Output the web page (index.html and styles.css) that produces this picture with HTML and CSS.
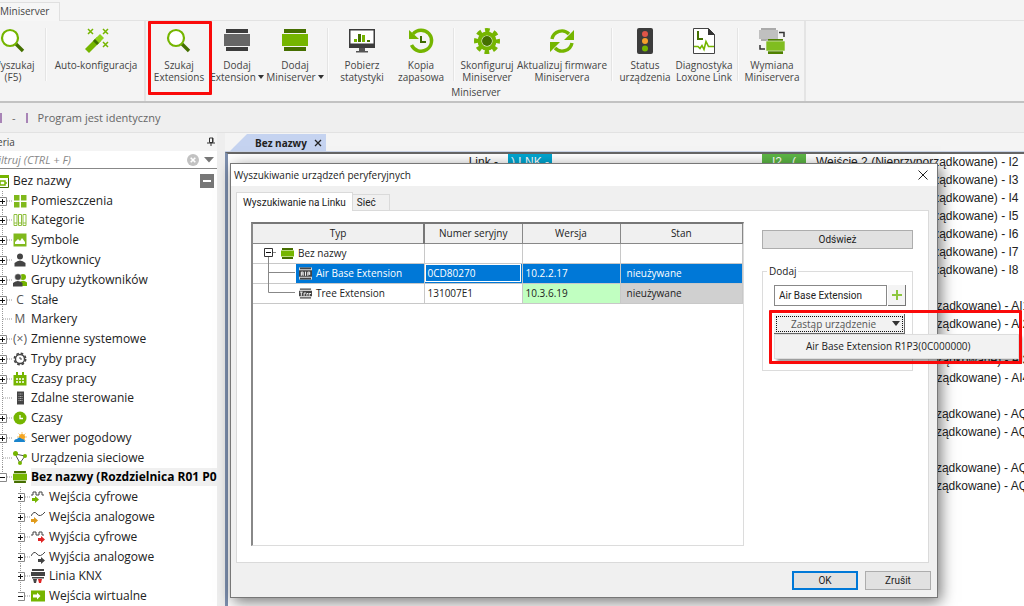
FILE: index.html
```html
<!DOCTYPE html>
<html lang="pl">
<head>
    <meta charset="UTF-8">
    <meta name="viewport" content="width=device-width, initial-scale=1.0">
    <title>Loxone Config - Wyszukiwanie urządzeń peryferyjnych</title>
    <link rel="stylesheet" href="styles.css">
</head>
<body>
    <!-- shared icons -->
    <svg class="defs" aria-hidden="true">
        <symbol id="search" viewBox="0 0 26 26">
            <path d="M16 16l7 7" stroke="#447000" stroke-width="3.4"/>
            <circle cx="10" cy="10" r="8" fill="#fff" stroke="#75b500" stroke-width="2.2"/>
        </symbol>
        <symbol id="device" viewBox="0 0 26 26">
            <path d="M2 1h22v4H2zM2 19h22v4H2z" fill="#466f00"/>
            <path d="M0 6h26v12H0z" fill="#75b500"/>
        </symbol>
        <symbol id="plus" viewBox="0 0 13 20">
            <path d="M2.5 0v20M7 10h6" stroke="#999" stroke-dasharray="1 1"/>
            <path d="M-1.5 6.5h8v8h-8z" fill="#fff" stroke="#888"/>
            <path d="M0 10.500h5M2.500 8v5" stroke="#111"/>
        </symbol>
        <symbol id="minus" viewBox="0 0 13 20">
            <path d="M2.5 0v6M7 10h6" stroke="#999" stroke-dasharray="1 1"/>
            <path d="M-1.5 6.5h8v8h-8z" fill="#fff" stroke="#888"/>
            <path d="M0 10.500h5" stroke="#111"/>
        </symbol>
        <symbol id="leaf" viewBox="0 0 13 20">
            <path d="M2.5 0v20M3 10h9" stroke="#999" stroke-dasharray="1 1"/>
        </symbol>
    </svg>

    <div class="app">
        <nav class="tabs"><a href="#" class="tab">Miniserver</a></nav>

        <div class="ribbon">
            <section class="group">
                <div class="tools">
                    <button class="tool cut"><svg viewBox="0 0 26 26"><use href="#search"/></svg>Wyszukaj<br>(F5)</button>
                    <i class="sep"></i>
                    <button class="tool xwide">
                        <svg viewBox="0 0 26 26"><path d="M2 21L14 9l4 4L6 25z" fill="#75b500"/><path d="M11 12l6-6 4 4-6 6z" fill="#8fd01a"/><path d="M10 13l2-2 4 4-2 2z" fill="#3f7000"/><path d="M5 1l5 5m0-5L5 6M20 1l5 5m0-5l-5 5M20 14l5 5m0-5l-5 5" stroke="#75b500" stroke-width="1.5"/></svg>Auto-konfiguracja</button>
                </div>
            </section>
            <section class="group main-group">
                <div class="tools">
                    <button class="tool marked"><svg viewBox="0 0 26 26"><use href="#search"/></svg>Szukaj<br>Extensions</button>
                    <button class="tool"><svg viewBox="0 0 26 26"><path d="M2 1h22v4H2zM2 19h22v4H2z" fill="#3c3c3c"/><path d="M0 6h26v12H0z" fill="#666"/></svg>Dodaj<br>Extension<b class="caret"></b></button>
                    <button class="tool"><svg viewBox="0 0 26 26"><use href="#device"/></svg>Dodaj<br>Miniserver<b class="caret"></b></button>
                    <i class="sep"></i>
                    <button class="tool wide"><svg viewBox="0 0 26 26"><path d="M0 1h26v19H0z" fill="#3c3c3c"/><path d="M1.500 2.500h23v13h-23z" fill="#fff"/><path d="M10 20h6v3h3v1.500H7V23h3z" fill="#555"/><path d="M5 11h3v3H5zM13 7h3v7h-3z" fill="#75b500"/><path d="M9 6h3v8H9zM18 12h3v2h-3z" fill="#447000"/></svg>Pobierz<br>statystyki</button>
                    <button class="tool"><svg viewBox="0 0 26 26"><path d="M5 6a10.500 10.500 0 1 1-1.500 11" fill="none" stroke="#75b500" stroke-width="3.400"/><path d="M1 2v9h10z" fill="#75b500"/><path d="M13 8v6h5" fill="none" stroke="#3f6b00" stroke-width="2"/></svg>Kopia<br>zapasowa</button>
                    <i class="sep"></i>
                    <button class="tool"><svg viewBox="0 0 26 26"><circle cx="13" cy="13" r="10.500" fill="none" stroke="#75b500" stroke-width="5" stroke-dasharray="4.500 3.750" stroke-dashoffset="2.250"/><circle cx="13" cy="13" r="7.500" fill="#f4f4f4" stroke="#75b500" stroke-width="4"/><circle cx="13" cy="13" r="5" fill="#447000"/></svg>Skonfiguruj<br>Miniserver</button>
                    <button class="tool xwide"><svg viewBox="0 0 26 26"><path d="M3 11A10 10 0 0 1 20 6M23 15A10 10 0 0 1 6 20" fill="none" stroke="#75b500" stroke-width="3.400"/><path d="M25 2v10H15zM1 24V14h10z" fill="#75b500"/></svg>Aktualizuj firmware<br>Miniservera</button>
                    <i class="sep"></i>
                    <button class="tool"><svg viewBox="0 0 26 26"><rect x="5" width="16" height="26" rx="2" fill="#3c3c3c"/><circle cx="13" cy="6" r="3" fill="#e05548"/><circle cx="13" cy="13" r="3" fill="#f7a02c"/><circle cx="13" cy="20.500" r="3" fill="#75b500"/></svg>Status<br>urządzenia</button>
                    <button class="tool wide"><svg viewBox="0 0 26 26"><path d="M2.500 .5h15l6 6v19h-21z" fill="#fff" stroke="#444"/><path d="M17 0v7h7z" fill="#333"/><path d="M7 3v8h5" fill="none" stroke="#447000" stroke-width="2"/><path d="M3 18.500h4l2 2 2-3 2 4 2-8 2.500 5H23" fill="none" stroke="#75b500" stroke-width="1.600"/></svg>Diagnostyka<br>Loxone Link</button>
                    <i class="sep"></i>
                    <button class="tool wide"><svg viewBox="0 0 26 26"><path d="M2 0h15v13H2z" fill="#aaa"/><path d="M0 2h19v9H0z" fill="#c0c0c0"/><path d="M9 11h15v15H9z" fill="#4f8000"/><path d="M7 13h19v10H7z" fill="#80bd20" stroke="#f4f4f4" stroke-width=".6"/><path d="M20 4.500h5V9M1 17v4h5" fill="none" stroke="#333" stroke-width="1.500"/></svg>Wymiana<br>Miniservera</button>
                </div>
                <span class="group-name">Miniserver</span>
            </section>
        </div>

        <div class="status"><i></i><span>-</span><i></i><span>Program jest identyczny</span></div>

        <main class="work">
            <aside class="side">
                <header class="side-head"><span class="side-title">Peryferia</span>
                    <svg class="pin" viewBox="0 0 8 10"><path d="M2.500 1h3.500v4.500h-3.500zM0 6h8M4 6v3M5.500 1v5" fill="none" stroke="#333"/></svg>
                </header>
                <div class="filter">
                    <input class="filter-box" type="text" placeholder="Filtruj (CTRL + F)" aria-label="Filtruj">
                    <button class="clear" aria-label="Wyczyść"><svg viewBox="0 0 13 13"><circle cx="6.500" cy="6.500" r="6.500" fill="#c2c2c2"/><path d="M4 4l5 5m0-5L4 9" stroke="#fff" stroke-width="1.700"/></svg></button>
                    <button class="more" aria-label="Opcje"><svg viewBox="0 0 10 6"><path d="M0 0h10L5 5.500z" fill="#777"/></svg></button>
                </div>
                <ul class="tree">
                    <li class="root"><svg class="ico" viewBox="0 0 14 14"><path d="M.5 1.500h13v12H.5z" fill="#fff" stroke="#447000"/><path d="M0 1h14v3H0z" fill="#75b500"/><path d="M5 7h5v4H5zM3 9h2m5 0h2" fill="none" stroke="#75b500" stroke-width="1.500"/></svg><span>Bez nazwy</span><button class="fold" aria-label="Zwiń"></button></li>
                    <li><svg class="node"><use href="#plus"/></svg><svg class="ico" viewBox="0 0 14 14"><path d="M1 1h5.500v5.500H1zM8 1h5.500v5.500H8zM1 8h5.500v5.500H1zM8 8h5.500v5.500H8z" fill="#80b91c"/></svg><span>Pomieszczenia</span></li>
                    <li><svg class="node"><use href="#plus"/></svg><svg class="ico" viewBox="0 0 14 14"><path d="M1 1.500h3v11H1zM5.500 1.500h3v11h-3zM10 1.500h3v11h-3zM1 10h3m1.500 0h3m1.500 0h3" fill="none" stroke="#8fbf3f"/></svg><span>Kategorie</span></li>
                    <li><svg class="node"><use href="#plus"/></svg><svg class="ico" viewBox="0 0 14 14"><path d="M.5 .5h13v13H.5z" fill="#80b91c"/><path d="M2 11V9l3-3 2 2 2-3 3 4v2z" fill="#fff"/></svg><span>Symbole</span></li>
                    <li><svg class="node"><use href="#plus"/></svg><svg class="ico" viewBox="0 0 14 14"><circle cx="7" cy="3.500" r="3" fill="#444"/><path d="M1.500 13.500V10Q7 5 12.500 10v3.500z" fill="#444"/></svg><span>Użytkownicy</span></li>
                    <li><svg class="node"><use href="#plus"/></svg><svg class="ico" viewBox="0 0 14 14"><circle cx="10" cy="4" r="3" fill="#75b500"/><path d="M6 13V10q4-4 8-.5V13z" fill="#75b500"/><circle cx="5" cy="4" r="3.300" fill="#444" stroke="#fff" stroke-width=".5"/><path d="M0 13.500V10q5-4 9.500 0v3.500z" fill="#444"/></svg><span>Grupy użytkowników</span></li>
                    <li><svg class="node"><use href="#plus"/></svg><b class="ico sign">C</b><span>Stałe</span></li>
                    <li><svg class="node"><use href="#leaf"/></svg><b class="ico sign">M</b><span>Markery</span></li>
                    <li><svg class="node"><use href="#plus"/></svg><b class="ico sign">(×)</b><span>Zmienne systemowe</span></li>
                    <li><svg class="node"><use href="#plus"/></svg><svg class="ico" viewBox="0 0 14 14"><circle cx="7" cy="7" r="5.700" fill="none" stroke="#444" stroke-width="1.600" stroke-dasharray="2.600 1.880"/><circle cx="7" cy="7" r="4.500" fill="#fff" stroke="#444" stroke-width="1.400"/><path d="M7 5v2h2" fill="none" stroke="#444"/></svg><span>Tryby pracy</span></li>
                    <li><svg class="node"><use href="#plus"/></svg><svg class="ico" viewBox="0 0 14 14"><path d="M.5 3H3V0h2v3h4V0h2v3h2.500v10.500H.5z" fill="#75b500"/><path d="M3 7h2m1 0h2m1 0h2M3 10h2m1 0h2m1 0h2" stroke="#fff" stroke-width="1.600"/></svg><span>Czasy pracy</span></li>
                    <li><svg class="node"><use href="#leaf"/></svg><svg class="ico" viewBox="0 0 14 14"><path d="M4 .5h7v13H4z" fill="#444"/><path d="M5.500 3h4M5.500 5.500h4M5.500 7.500h4M5.500 9.500h4" stroke="#aaa" stroke-dasharray="1 .5"/></svg><span>Zdalne sterowanie</span></li>
                    <li><svg class="node"><use href="#plus"/></svg><svg class="ico" viewBox="0 0 14 14"><circle cx="7" cy="7" r="6.500" fill="#75b500"/><path d="M7 4v3.500h3" fill="none" stroke="#fff" stroke-width="1.300"/></svg><span>Czasy</span></li>
                    <li><svg class="node"><use href="#plus"/></svg><svg class="ico" viewBox="0 0 14 14"><path d="M9 1v10M4 6h10M5.500 2.500l7 7m0-7l-7 7" stroke="#f7c56a"/><circle cx="9" cy="6" r="3" fill="#f5a623"/><path d="M1 11q0-3 3-3 2-3 5 0 3 0 3 3z" fill="#1984cc"/></svg><span>Serwer pogodowy</span></li>
                    <li><svg class="node"><use href="#leaf"/></svg><svg class="ico" viewBox="0 0 14 14"><path d="M2 3l10 2-5 7z" fill="none" stroke="#555"/><circle cx="2.500" cy="2.500" r="2.500" fill="#75b500"/><circle cx="12" cy="5" r="2" fill="#75b500"/><circle cx="7" cy="12" r="2" fill="#75b500"/></svg><span>Urządzenia sieciowe</span></li>
                    <li class="current"><svg class="node"><use href="#minus"/></svg><svg class="ico" viewBox="0 0 26 24"><use href="#device" width="26" height="26"/></svg><span>Bez nazwy (Rozdzielnica R01 P01)</span></li>
                    <li class="sub"><svg class="node"><use href="#plus"/></svg><svg class="ico" viewBox="0 0 14 14"><path d="M0 5h2V2h3v3h3V2h3v3h2" fill="none" stroke="#444"/><path d="M1 8h3V6l4 3.500L4 13v-2H1z" fill="#75b500"/></svg><span>Wejścia cyfrowe</span></li>
                    <li class="sub"><svg class="node"><use href="#plus"/></svg><svg class="ico" viewBox="0 0 14 14"><path d="M0 6q3-6 6-2t8-2" fill="none" stroke="#444"/><path d="M0 9h3V7l4 3.500L3 14v-2H0z" fill="#e09a1a"/></svg><span>Wejścia analogowe</span></li>
                    <li class="sub"><svg class="node"><use href="#plus"/></svg><svg class="ico" viewBox="0 0 14 14"><path d="M0 5h2V2h3v3h3V2h3v3h2" fill="none" stroke="#444"/><path d="M7 8h3V6l4 3.500-4 3.500v-2H7z" fill="#e02424"/></svg><span>Wyjścia cyfrowe</span></li>
                    <li class="sub"><svg class="node"><use href="#plus"/></svg><svg class="ico" viewBox="0 0 14 14"><path d="M0 6q3-6 6-2t8-2" fill="none" stroke="#444"/><path d="M7 9h3V7l4 3.500-4 3.500v-2H7z" fill="#444"/></svg><span>Wyjścia analogowe</span></li>
                    <li class="sub"><svg class="node"><use href="#plus"/></svg><svg class="ico" viewBox="0 0 14 14"><path d="M1 0h12v2H1zM0 3h14v4H0zM1 8h12v1.500H1zM2 10h4l-1 4H3z" fill="#444"/><path d="M7 10h4l-1 4H8z" fill="#e02424"/></svg><span>Linia KNX</span></li>
                    <li class="sub"><svg class="node"><use href="#minus"/></svg><svg class="ico" viewBox="0 0 14 14"><path d="M0 1.500h14v11H0z" fill="#75b500"/><path d="M2 5.500h4v-2L9.500 7 6 10.500v-2H2z" fill="#fff"/></svg><span>Wejścia wirtualne</span></li>
                </ul>
            </aside>

            <section class="doc">
                <div class="doc-tabs"><a href="#" class="doc-tab"><b>Bez nazwy</b><svg viewBox="0 0 8 8"><path d="M1 1l6 6m0-6L1 7" stroke="#222" stroke-width="1.300"/></svg></a></div>
                <div class="sheet">
                    <div class="line"><span class="link">Link -</span><span class="port lnk">)&nbsp;LNK&nbsp;-</span><span class="port in">I2&nbsp;&nbsp;&nbsp;(</span><span>Wejście 2 (Nieprzyporządkowane) - I2</span></div>
                    <ul class="io">
                        <li>Wejście 3 (Nieprzyporządkowane) - I3</li>
                        <li>Wejście 4 (Nieprzyporządkowane) - I4</li>
                        <li>Wejście 5 (Nieprzyporządkowane) - I5</li>
                        <li>Wejście 6 (Nieprzyporządkowane) - I6</li>
                        <li>Wejście 7 (Nieprzyporządkowane) - I7</li>
                        <li>Wejście 8 (Nieprzyporządkowane) - I8</li>
                        <li></li>
                        <li>Wejście: 1 (Nieprzyporządkowane) - AI1</li>
                        <li>Wejście: 2 (Nieprzyporządkowane) - AI2</li>
                        <li></li>
                        <li>Wejście: 3 (Nieprzyporządkowane) - AI3</li>
                        <li>Wejście: 4 (Nieprzyporządkowane) - AI4</li>
                        <li></li>
                        <li>Wyjście: 1 (Nieprzyporządkowane) - AQ1</li>
                        <li>Wyjście: 2 (Nieprzyporządkowane) - AQ2</li>
                        <li></li>
                        <li>Wyjście: 3 (Nieprzyporządkowane) - AQ3</li>
                        <li>Wyjście: 4 (Nieprzyporządkowane) - AQ4</li>
                    </ul>
                </div>
            </section>
        </main>
    </div>

    <div class="dialog" role="dialog" aria-labelledby="dlg-title">
        <header class="dlg-head">
            <span id="dlg-title">Wyszukiwanie urządzeń peryferyjnych</span>
            <button class="close" aria-label="Zamknij"><svg viewBox="0 0 10 10"><path d="M.5 .5l9 9m0-9l-9 9" stroke="#222"/></svg></button>
        </header>
        <div class="dlg-body">
            <div class="dlg-tabs" role="tablist">
                <button class="dlg-tab on" role="tab">Wyszukiwanie na Linku</button>
                <button class="dlg-tab" role="tab">Sieć</button>
            </div>
            <div class="page">
                <div class="list">
                    <table>
                        <thead>
                            <tr><th class="c-type">Typ</th><th class="c-num sorted">Numer seryjny</th><th class="c-num">Wersja</th><th>Stan</th></tr>
                        </thead>
                        <tbody>
                            <tr>
                                <td class="type"><div class="cell"><svg class="branch short" viewBox="0 0 28 20"><path d="M15.500 14v6M20 9.500h3" stroke="#888"/><path d="M11.500 5.500h8v8h-8z" fill="#fff" stroke="#333"/><path d="M13 9.500h5" stroke="#111"/></svg><svg class="dev" viewBox="0 0 26 24"><use href="#device" width="26" height="26"/></svg>Bez nazwy</div></td>
                                <td></td><td></td><td></td>
                            </tr>
                            <tr class="selected">
                                <td class="type"><div class="cell"><svg class="branch" viewBox="0 0 43 20"><path d="M15.500 0v20M15 9.500h27" stroke="#888"/></svg><span class="name"><svg class="dev" viewBox="0 0 14 13"><path d="M0 0h14v13H0z" fill="#ddd"/><path d="M1 0h12v2H1zM0 3h14v7H0zM1 11h12v2H1z" fill="#444"/><path d="M2.500 9V5h2v4m0-2h-2M7 4.500V9m2.500 0V5h2v3M9.500 7h2" fill="none" stroke="#fff"/></svg>Air Base Extension</span></div></td>
                                <td class="focus">0CD80270</td><td>10.2.2.17</td><td class="state">nieużywane</td>
                            </tr>
                            <tr>
                                <td class="type"><div class="cell"><svg class="branch" viewBox="0 0 43 20"><path d="M15.500 0v9.500H42" fill="none" stroke="#888"/></svg><span class="name"><svg class="dev" viewBox="0 0 14 13"><path d="M1 1h12v1.500H1zM0 3.500h14v6H0zM1 10.500h12V12H1z" fill="#444"/><path d="M1 5h3M2.500 5v4M5.500 9V6h2M8.500 9V6.500h1.500M11 9V6.500h2" fill="none" stroke="#fff"/></svg>Tree Extension</span></div></td>
                                <td>131007E1</td><td class="ok-version">10.3.6.19</td><td class="state idle">nieużywane</td>
                            </tr>
                        </tbody>
                    </table>
                </div>
                <div class="actions">
                    <button class="btn refresh">Odśwież</button>
                    <fieldset>
                        <legend>Dodaj</legend>
                        <div class="add-row">
                            <input class="add-box" type="text" value="Air Base Extension" aria-label="Typ urządzenia">
                            <button class="add" aria-label="Dodaj"><svg viewBox="0 0 10 10"><path d="M5 0v10M0 5h10" stroke="#8cc63f" stroke-width="2"/></svg></button>
                        </div>
                        <div class="replace">
                            <button class="replace-btn" aria-haspopup="menu" aria-expanded="true"><span>Zastąp urządzenie</span><svg viewBox="0 0 8 5"><path d="M0 0h8L4 5z" fill="#333"/></svg></button>
                            <div class="menu" role="menu"><button role="menuitem">Air Base Extension R1P3(0C000000)</button></div>
                            <div class="mark"></div>
                        </div>
                    </fieldset>
                </div>
            </div>
            <footer class="dlg-foot">
                <button class="btn primary">OK</button>
                <button class="btn">Zrušit</button>
            </footer>
        </div>
    </div>
</body>
</html>
```
FILE: styles.css
```css
*, *::after {
    box-sizing: border-box;
}

body {
    margin: 0;
    overflow: hidden;
    font-family: "Open Sans", "Noto Sans", sans-serif;
    font-size: 10px;
    color: #222;
    background: #f0f0f0;
}

button, input {
    font: inherit;
    color: inherit;
    padding: 0;
    margin: 0;
    border: 0;
    border-radius: 0;
    background: none;
}

a {
    color: inherit;
    text-decoration: none;
}

ul {
    list-style: none;
    margin: 0;
    padding: 0;
}

svg {
    display: block;
    flex: none;
}

.defs {
    position: absolute;
    width: 0;
    height: 0;
}

.app {
    height: 100vh;
    display: flex;
    flex-direction: column;
}

/* ribbon */
.tabs {
    height: 21px;
    display: flex;
    align-items: flex-end;
    background: #f4f4f4;
    border-bottom: 1px solid #e2e2e2;
}

.tab {
    height: 19px;
    margin-bottom: -1px;
    padding: 0 10px 0 0;
    line-height: 17px;
    color: #444;
    background: #f6f6f6;
    border: 1px solid #e0e0e0;
    border-width: 1px 1px 0 0;
}

.ribbon {
    height: 82px;
    display: flex;
    background: #f4f4f4;
    border-bottom: 2px solid #c2c2c2;
}

.group {
    display: flex;
    flex-direction: column;
    border-right: 2px solid #e4e4e4;
    padding-top: 7px;
    padding-right: 2px;
}

.main-group {
    padding-left: 4px;
}

.tools {
    display: flex;
    height: 57px;
}

.tool {
    position: relative;
    width: 58px;
    line-height: 12px;
    color: #444;
    white-space: nowrap;
    display: block;
    text-align: center;
    align-self: flex-start;
}

.tool svg {
    width: 26px;
    height: 26px;
    margin: 0 auto 5px;
}

.tool.wide {
    width: 60px;
}

.tool.xwide {
    width: 92px;
}

.tool.cut {
    margin-left: -16px;
}

.tool.marked::after {
    content: "";
    position: absolute;
    left: -2px;
    top: -7px;
    width: 64px;
    height: 74px;
    border: 3px solid #fa0a0a;
    border-radius: 1px;
    z-index: 1;
}

.sep {
    width: 2px;
    height: 53px;
    margin: 0 3px;
    background: #e4e4e4;
    border-right: 1px solid #fbfbfb;
}

.caret {
    display: inline-block;
    margin-left: 2px;
    vertical-align: 2px;
    border: 3px solid transparent;
    border-top: 4px solid #333;
    border-bottom: 0;
}

.group-name {
    text-align: center;
    line-height: 14px;
    color: #444;
}

.status {
    height: 30px;
    display: flex;
    align-items: center;
    gap: 10px;
    font-size: 11px;
    color: #666;
    background: #efefef;
    border-bottom: 1px solid #e2e2e2;
}

.status i {
    width: 2px;
    height: 10px;
    background: #a884b6;
}

/* device tree */
.work {
    flex: 1;
    min-height: 0;
    display: flex;
}

.side {
    width: 225px;
    padding-right: 8px;
    display: flex;
    flex-direction: column;
    background: #eee;
}

.side-head {
    height: 18px;
    padding-right: 2px;
    display: flex;
    align-items: center;
    justify-content: space-between;
    background: #f4f4f4;
}

.side-title {
    margin-left: -27px;
    color: #444;
}

.pin {
    width: 8px;
    height: 10px;
}

.filter {
    height: 18px;
    display: flex;
    align-items: center;
    gap: 5px;
    padding-right: 3px;
    background: #fff;
    border-bottom: 1px solid #888;
}

.filter-box {
    flex: 1;
    min-width: 0;
    margin-left: -7px;
    font-size: 11px;
    font-style: italic;
    outline: 0;
}

.filter-box::placeholder {
    color: #888;
}

.clear svg {
    width: 12px;
    height: 12px;
}

.more svg {
    width: 10px;
    height: 6px;
}

.tree {
    flex: 1;
    min-height: 0;
    padding-top: 2px;
    display: grid;
    grid-auto-rows: 1fr;
    font-size: 12px;
    background: #fff;
    overflow: hidden;
}

.tree li {
    min-height: 0;
    min-width: 0;
    display: flex;
    align-items: center;
    line-height: 18px;
    white-space: nowrap;
}

.tree .root {
    padding-right: 3px;
}

.root .ico {
    margin-left: -5px;
}

.tree .sub {
    padding-left: 18px;
}

.node {
    width: 13px;
    height: 20px;
}

.ico {
    flex: none;
    width: 14px;
    height: 14px;
    margin-right: 4px;
}

.sign {
    display: flex;
    align-items: center;
    justify-content: center;
    font-weight: 400;
    color: #555;
}

.fold {
    width: 14px;
    height: 14px;
    margin-left: auto;
    border: solid #777;
    border-width: 6px 3px;
    background: #fff;
}

.current span {
    flex: 1;
    overflow: hidden;
    font-weight: 700;
    color: #000;
    background: #f0f0f0;
}

/* document */
.doc {
    flex: 1;
    min-width: 0;
    display: flex;
    flex-direction: column;
}

.doc-tabs {
    height: 19px;
    padding: 1px 0 0 5px;
    background: #f4f4f4;
    border-bottom: 1px solid #c9d3e6;
}

.doc-tab {
    width: 96px;
    height: 17px;
    padding: 0 4px 0 25px;
    display: flex;
    align-items: center;
    justify-content: space-between;
    background: #c5d3f0;
    clip-path: polygon(0 100%, 17px 0, 100% 0, 100% 100%);
}

.doc-tab svg {
    width: 8px;
    height: 8px;
}

.sheet {
    flex: 1;
    min-height: 0;
    overflow: hidden;
    font-family: "Liberation Sans", Arial, sans-serif;
    font-size: 12px;
    line-height: 18px;
    white-space: nowrap;
    background: #fff;
    border: solid #666;
    border-width: 2px 0 0 3px;
    border-left-color: #7d8fae;
}

.line {
    display: flex;
    height: 17px;
    line-height: 17px;
}

.link {
    width: 270px;
    text-align: right;
}

.port {
    width: 44px;
    margin: 0 10px;
    text-align: center;
    color: #fff;
}

.lnk {
    background: #00a5d0;
    margin-right: 200px;
}

.in {
    background: #5cb545;
}

.io {
    padding-left: 588px;
}

.io li {
    height: 18px;
}

/* dialog */
.dialog {
    position: absolute;
    left: 230px;
    top: 163px;
    width: 708px;
    background: #f0f0f0;
    border: 1px solid #777;
    box-shadow: 3px 4px 14px #0008;
}

.dlg-head {
    height: 22px;
    padding: 0 9px 0 3px;
    display: flex;
    align-items: center;
    justify-content: space-between;
    background: #fff;
}

.close svg {
    width: 10px;
    height: 10px;
}

.dlg-body {
    padding: 6px 6px 7px 5px;
}

.dlg-tabs {
    display: flex;
    align-items: flex-end;
}

.dlg-tab,
.btn,
.add-box {
    font-family: Roboto, "Open Sans", sans-serif;
}

.dlg-tab {
    height: 16px;
    padding: 0 13px 0 4px;
    border: 1px solid #dadada;
    border-width: 1px 1px 0 0;
}

.dlg-tab.on {
    height: 19px;
    padding: 0 6px;
    margin-bottom: -1px;
    background: #fff;
    border-left-width: 1px;
}

.page {
    margin-right: 2px;
    padding: 11px 15px 16px 14px;
    display: flex;
    gap: 18px;
    background: #fff;
    border: 1px solid #dadada;
}

.list {
    width: 493px;
    height: 324px;
    border: solid #dcdcdc;
    border-width: 2px 1px 1px 2px;
    border-top-color: #777;
    border-left-color: #888;
}

table {
    width: 490px;
    table-layout: fixed;
    border-collapse: collapse;
}

th {
    height: 19px;
    padding: 0;
    font-weight: 400;
    background: #f0f0f0;
    border: 1px solid #888;
    border-width: 0 1px 1px 0;
}

.c-type {
    width: 171px;
}

.c-num {
    width: 98px;
}

.sorted {
    border-left: 2px solid #777;
}

td {
    height: 20px;
    padding: 0 3px;
    line-height: 19px;
    border: 1px solid #c8c8c8;
    border-width: 0 1px 1px 0;
}

.type {
    padding: 0;
}

.cell {
    display: flex;
    align-items: center;
    height: 19px;
}

.branch {
    width: 43px;
    height: 20px;
}

.branch.short {
    width: 28px;
}

.dev {
    width: 13px;
    height: 13px;
    margin-right: 4px;
}

.name {
    flex: 1;
    display: flex;
    align-items: center;
    padding-left: 3px;
}

.selected .name,
.selected td:not(.type) {
    color: #fff;
    background: #0078d7;
}

.selected .focus {
    outline: 1px solid #fff;
    outline-offset: -2px;
}

td.ok-version {
    background: #c1ffc1;
}

td.state {
    padding-left: 6px;
}

td.idle {
    background: #d0d0d0;
}

.actions {
    flex: 1;
    min-width: 0;
    padding-top: 8px;
}

.btn {
    width: 66px;
    height: 19px;
    background: #e1e1e1;
    border: 1px solid #adadad;
}

.btn.refresh {
    width: 100%;
}

.btn.primary {
    border: 2px solid #0078d7;
}

fieldset {
    min-width: 0;
    margin: 15px 0 0;
    padding: 7px 6px 36px 11px;
    border: 1px solid #dcdcdc;
}

legend {
    padding: 0 2px;
    margin-left: -7px;
    line-height: 14px;
}

.add-row {
    display: flex;
    gap: 1px;
}

.add-box {
    flex: 1;
    min-width: 0;
    height: 21px;
    padding: 0 4px;
    border: 1px solid #888;
    background: #fff;
}

.add {
    width: 18px;
    height: 21px;
    border: 1px solid #777;
    border-width: 0 1px 1px 0;
    background: #f4f4f4;
}

.add svg {
    width: 10px;
    height: 10px;
    margin: 0 auto;
}

.replace {
    position: relative;
    margin-top: 8px;
}

.replace-btn {
    width: 131px;
    height: 20px;
    padding: 0 4px 0 17px;
    display: flex;
    align-items: center;
    justify-content: space-between;
    color: #555;
    background: #f2f2f2;
    border: 1px solid #666;
    border-width: 0 1px 1px 0;
    outline: 1px dotted #111;
    outline-offset: -3px;
}

.replace-btn svg {
    width: 8px;
    height: 5px;
}

.menu {
    position: absolute;
    left: 0;
    top: 20px;
    width: 245px;
    height: 25px;
    padding: 2px;
    background: #f2f2f2;
    border: 1px solid #ddd;
    box-shadow: 3px 3px 3px #0006;
}

.menu button {
    width: 100%;
    padding-left: 29px;
    line-height: 19px;
    text-align: left;
}

.mark {
    position: absolute;
    left: -5px;
    top: -4px;
    width: 253px;
    height: 54px;
    border: 3px solid #fa0a0a;
    border-radius: 1px;
    pointer-events: none;
}

.dlg-foot {
    margin-top: 8px;
    display: flex;
    justify-content: flex-end;
    gap: 7px;
}
```
